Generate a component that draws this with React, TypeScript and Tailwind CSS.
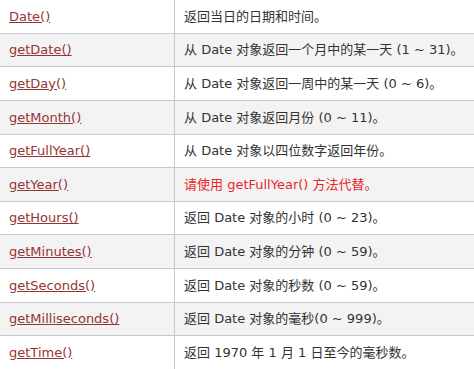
import React from 'react';

const rows = [
  { name: 'Date()', desc: '返回当日的日期和时间。', h: 'h-[34px]' },
  { name: 'getDate()', desc: '从 Date 对象返回一个月中的某一天 (1 ~ 31)。', h: 'h-[33px]' },
  { name: 'getDay()', desc: '从 Date 对象返回一周中的某一天 (0 ~ 6)。', h: 'h-[34px]' },
  { name: 'getMonth()', desc: '从 Date 对象返回月份 (0 ~ 11)。', h: 'h-[34px]' },
  { name: 'getFullYear()', desc: '从 Date 对象以四位数字返回年份。', h: 'h-[33px]' },
  { name: 'getYear()', desc: '请使用 getFullYear() 方法代替。', h: 'h-[34px]', warn: true },
  { name: 'getHours()', desc: '返回 Date 对象的小时 (0 ~ 23)。', h: 'h-[33px]' },
  { name: 'getMinutes()', desc: '返回 Date 对象的分钟 (0 ~ 59)。', h: 'h-[34px]' },
  { name: 'getSeconds()', desc: '返回 Date 对象的秒数 (0 ~ 59)。', h: 'h-[34px]' },
  { name: 'getMilliseconds()', desc: '返回 Date 对象的毫秒(0 ~ 999)。', h: 'h-[33px]' },
  { name: 'getTime()', desc: '返回 1970 年 1 月 1 日至今的毫秒数。', h: 'h-[34px]' },
];

export default function App() {
  return (
    <div className="w-[474px] h-[369px] overflow-hidden bg-white font-['DejaVu_Sans','Noto_Sans_CJK_SC',sans-serif] text-[13px] text-[#333]">
      {rows.map((row, i) => (
        <div
          key={row.name}
          className={`flex border-b border-[#c8c8c8] ${row.h} ${i % 2 === 1 ? 'bg-[#f3f3f3]' : 'bg-white'}`}
        >
          <div className="w-[175px] shrink-0 flex items-center pl-[9px] border-r border-[#c8c8c8]">
            <a href="#" className="text-[#953434] underline">
              {row.name}
            </a>
          </div>
          <div className={`flex-1 flex items-center pl-[9px] whitespace-nowrap ${row.warn ? 'text-[#e8262a]' : ''}`}>
            {row.desc}
          </div>
        </div>
      ))}
    </div>
  );
}
